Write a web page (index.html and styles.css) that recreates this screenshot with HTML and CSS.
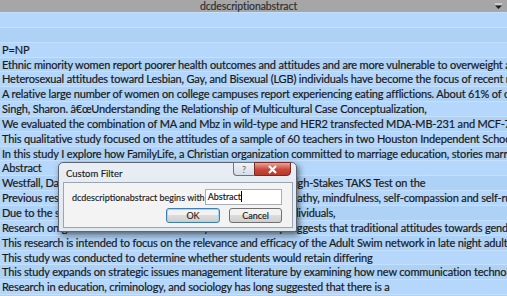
FILE: index.html
```html
<!DOCTYPE html>
<html lang="en">
<head>
    <meta charset="UTF-8">
    <title>dcdescriptionabstract</title>
    <link rel="stylesheet" href="styles.css">
</head>
<body>

<div class="sheet">
    <!-- column header with the filter arrow -->
    <div class="col-head">
        <span class="col-title">dcdescriptionabstract</span>
        <svg class="filter-btn" width="9" height="7" viewBox="0 0 9 7">
            <rect x="1" y="0.5" width="7" height="1" fill="#f4f4f4"/>
            <path d="M1 2.5 L8 2.5 L4.5 6 Z" fill="#202020"/>
        </svg>
    </div>

    <!-- cells -->
    <div class="rows">
        <div class="row"></div>
        <div class="row"></div>
        <div class="row">P=NP</div>
        <div class="row">Ethnic minority women report poorer health outcomes and attitudes and are more vulnerable to overweight and obesity than</div>
        <div class="row">Heterosexual attitudes toward Lesbian, Gay, and Bisexual (LGB) individuals have become the focus of recent research</div>
        <div class="row">A relative large number of women on college campuses report experiencing eating afflictions. About 61% of college</div>
        <div class="row">Singh, Sharon. â€œUnderstanding the Relationship of Multicultural Case Conceptualization,</div>
        <div class="row">We evaluated the combination of MA and Mbz in wild-type and HER2 transfected MDA-MB-231 and MCF-7 human breast</div>
        <div class="row">This qualitative study focused on the attitudes of a sample of 60 teachers in two Houston Independent School Districts</div>
        <div class="row">In this study I explore how FamilyLife, a Christian organization committed to marriage education, stories marriage</div>
        <div class="row">Abstract</div>
        <div class="row">Westfall, David. Teachers' Perceptions of the Influence of the High-Stakes TAKS Test on the</div>
        <div class="row">Previous research has examined the relationships between empathy, mindfulness, self-compassion and self-rumination</div>
        <div class="row">Due to the significant increase in the total number of elderly individuals,</div>
        <div class="row">Research on gender roles and modern family life consistently suggests that traditional attitudes towards gender roles</div>
        <div class="row">This research is intended to focus on the relevance and efficacy of the Adult Swim network in late night adult-oriented</div>
        <div class="row">This study was conducted to determine whether students would retain differing</div>
        <div class="row">This study expands on strategic issues management literature by examining how new communication technologies</div>
        <div class="row">Research in education, criminology, and sociology has long suggested that there is a</div>
        <div class="row"></div>
    </div>

    <!-- Custom Filter dialog floating over the sheet -->
    <div class="dialog">
        <div class="dlg-title">Custom Filter</div>
        <div class="dlg-caption-btns">
            <div class="cap-btn help">?</div>
            <div class="cap-btn close">
                <svg width="11" height="9" viewBox="0 0 11 9">
                    <path d="M2 1 L9 8 M9 1 L2 8" stroke="#fff" stroke-width="2.2"/>
                </svg>
            </div>
        </div>
        <div class="dlg-body">
            <div class="dlg-line">
                <label>dcdescriptionabstract begins with</label>
                <div class="dlg-input">Abstract<span class="caret"></span></div>
            </div>
            <div class="dlg-buttons">
                <div class="btn btn-default">OK</div>
                <div class="btn">Cancel</div>
            </div>
        </div>
    </div>
</div>

</body>
</html>
```

FILE: styles.css
```css
body {
    margin: 0;
    font-family: 'Lato', 'Liberation Sans', sans-serif;
    background-color: #b5d8fc;
    color: #1a1a1a;
    overflow: hidden;
}
.sheet {
    position: relative;
    width: 507px;
    height: 296px;
    overflow: hidden;
    font-size: 11px;
    letter-spacing: -0.16px;
    -webkit-text-stroke: 0.2px #1a1a1a;
}
.col-head {
    height: 12px;
    background-color: #a6a6a6;
    display: flex;
    align-items: center;
    justify-content: center;
    position: relative;
    font-size: 10.5px;
    letter-spacing: -0.1px;
    color: #2e2e2e;
    -webkit-text-stroke: 0.15px #2e2e2e;
}
.col-title {
    margin-left: -10px;
    line-height: 12px;
}
.filter-btn {
    position: absolute;
    right: 4px;
    top: 3px;
}
.row {
    height: 13.85px;
    border-top: 1px solid #c4e0fc;
    padding-left: 2px;
    line-height: 14px;
    white-space: nowrap;
    overflow: hidden;
    background-color: #b4d7fb;
}
.row:nth-child(even) {
    background-color: #aed2f6;
}

/* dialog */
.dialog {
    position: absolute;
    left: 58px;
    top: 162px;
    width: 239px;
    height: 70px;
    padding: 19px 3px 3px 4px;
    background: linear-gradient(#e9eef4, #dfe7ef);
    border: 1px solid #5d6670;
    border-radius: 5px 5px 2px 2px;
    box-shadow: 2px 3px 6px rgba(0, 0, 0, 0.55);
    box-sizing: border-box;
    font-size: 9px;
    letter-spacing: 0;
    -webkit-text-stroke: 0.15px #1c1c1c;
}
.dlg-title {
    position: absolute;
    left: 7px;
    top: 5px;
    font-size: 9.5px;
    color: #1c1c1c;
}
.dlg-caption-btns {
    position: absolute;
    right: 5px;
    top: -1px;
    display: flex;
}
.cap-btn {
    height: 14px;
    border: 1px solid #6a7480;
    box-sizing: border-box;
    display: flex;
    align-items: center;
    justify-content: center;
}
.help {
    width: 21px;
    border-radius: 0 0 0 4px;
    background: linear-gradient(#f0f3f7, #d5dde6);
    color: #666;
    font-size: 9px;
    -webkit-text-stroke: 0;
    border-right: none;
}
.close {
    width: 37px;
    border-radius: 0 0 4px 0;
    background: linear-gradient(#e8a598, #c8473a 55%, #b8382a);
    border-color: #7a2a22;
}
.dlg-body {
    height: 100%;
    background-color: #f3f3f3;
    border: 1px solid #9aa5b1;
    box-sizing: border-box;
    padding: 6px 10px 0 8px;
}
.dlg-line {
    display: flex;
    align-items: center;
    justify-content: space-between;
    height: 16px;
    white-space: nowrap;
}
.dlg-line label {
    color: #1e1e1e;
}
.dlg-input {
    width: 80px;
    height: 16px;
    box-sizing: border-box;
    border: 1px solid #abadb3;
    background-color: #fff;
    padding-left: 2px;
    line-height: 14px;
    color: #111;
}
.caret {
    display: inline-block;
    width: 1px;
    height: 11px;
    background-color: #000;
    vertical-align: -2px;
}
.dlg-buttons {
    display: flex;
    justify-content: flex-end;
    gap: 9px;
    margin-top: 3px;
}
.btn {
    width: 53px;
    height: 15px;
    box-sizing: border-box;
    border: 1px solid #707070;
    border-radius: 3px;
    background: linear-gradient(#f2f2f2 50%, #dcdcdc 50%, #cfcfcf);
    text-align: center;
    line-height: 13px;
    color: #1c1c1c;
}
.btn-default {
    width: 54px;
    border-color: #3c7fb1;
    box-shadow: inset 0 0 0 1px #9fd6f3;
}
```
